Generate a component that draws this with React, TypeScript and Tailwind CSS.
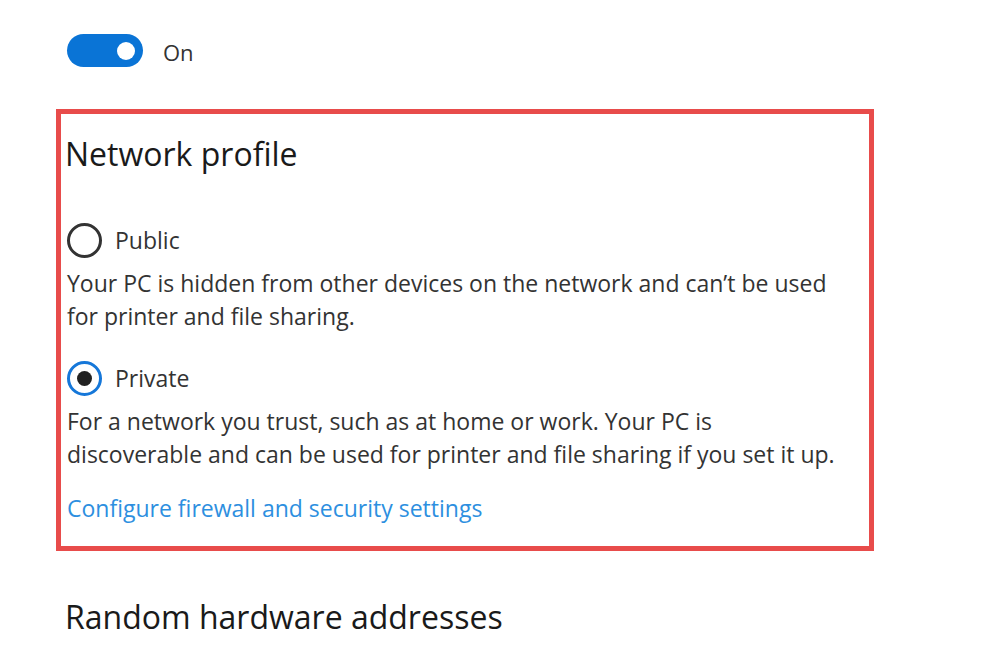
export default function App() {
  return (
    <div
      className="w-[1002px] h-[668px] bg-white overflow-hidden text-[#222]"
      style={{ fontFamily: '"Open Sans", "Noto Sans", sans-serif' }}
    >
      <div className="pt-[34px] pl-[67px] flex items-center gap-[20px]">
        <div className="w-[76px] h-[33px] rounded-full bg-[#0a74d6] flex items-center justify-end pr-[8px]">
          <div className="w-[18px] h-[18px] rounded-full bg-white" />
        </div>
        <span className="text-[22px] text-[#333] leading-none pt-[3px]">On</span>
      </div>

      <div className="mt-[42px] ml-[56px] w-[818px] h-[442px] border-[5px] border-[#e84c4b] pl-[4px] pt-[20px]">
        <h2 className="text-[32px] leading-[40px] text-[#1a1a1a]">Network profile</h2>

        <div className="mt-[49px] h-[35px] flex items-center gap-[13px] ml-[2px]">
          <div className="w-[35px] h-[35px] rounded-full border-[3px] border-[#333]" />
          <span className="text-[23px] text-[#333]">Public</span>
        </div>
        <p className="mt-[9px] ml-[2px] text-[23px] leading-[33px] text-[#333] whitespace-nowrap">
          Your PC is hidden from other devices on the network and can’t be used
          <br />
          for printer and file sharing.
        </p>

        <div className="mt-[28px] h-[35px] flex items-center gap-[13px] ml-[2px]">
          <div className="w-[35px] h-[35px] rounded-full border-[3px] border-[#1577d9] flex items-center justify-center">
            <div className="w-[15px] h-[15px] rounded-full bg-[#222]" />
          </div>
          <span className="text-[23px] text-[#333]">Private</span>
        </div>
        <p className="mt-[9px] ml-[2px] text-[23px] leading-[33px] text-[#333] whitespace-nowrap">
          For a network you trust, such as at home or work. Your PC is
          <br />
          discoverable and can be used for printer and file sharing if you set it up.
        </p>
        <p className="mt-[21px] ml-[2px] text-[23px] leading-[33px] text-[#2d8fe0]">
          Configure firewall and security settings
        </p>
      </div>

      <h2 className="mt-[46px] ml-[65px] text-[32px] leading-[40px] text-[#1a1a1a]">Random hardware addresses</h2>
    </div>
  );
}
